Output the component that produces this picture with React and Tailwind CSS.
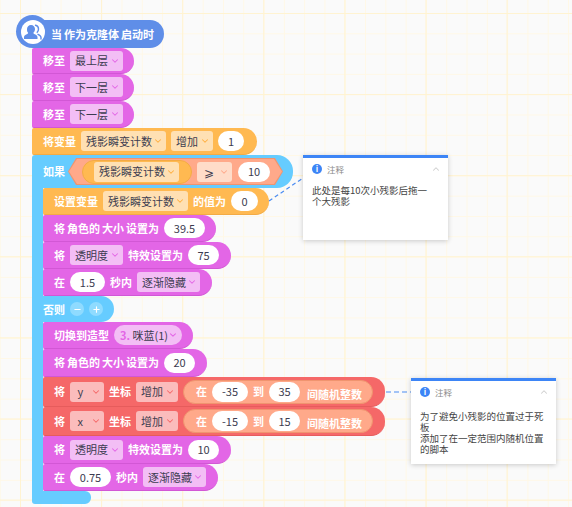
import { ChevronDown, ChevronUp, Minus, Plus } from "lucide-react";

const fontStack = { fontFamily: '"Noto Sans CJK SC", "Noto Sans", sans-serif' };

const themes = {
  purple: {
    block: "bg-[#e366e6] border-[#d257d5]",
    menu: "bg-[#f3bef5]",
    chevron: "text-[#e366e6]",
  },
  orange: {
    block: "bg-[#ffb951] border-[#f3ab45]",
    menu: "bg-[#ffe0b3]",
    chevron: "text-[#ffb040]",
  },
  red: {
    block: "bg-[#f56868] border-[#e65c5c]",
    menu: "bg-[#fbbcbc]",
    chevron: "text-[#f56868]",
  },
};

function Label({ children }) {
  return (
    <span className="text-[11px] font-bold leading-none text-white whitespace-pre [word-spacing:-0.5px]">{children}</span>
  );
}

function Menu({ text, theme, w, pill }) {
  return (
    <span
      className={`flex h-[20px] items-center justify-between pl-[5px] pr-[3px] text-[11px] leading-none text-[#3c3c50] ${
        pill ? "rounded-full" : "rounded-[3px]"
      } ${theme.menu}`}
      style={{ width: w }}
    >
      <span className="whitespace-pre">{text}</span>
      <ChevronDown size={10} strokeWidth={2.5} className={theme.chevron} />
    </span>
  );
}

function Num({ value, w }) {
  return (
    <span
      className="flex h-[20px] items-center justify-center rounded-full bg-white text-[11px] leading-none text-[#3c3c50]"
      style={{ width: w }}
    >
      {value}
    </span>
  );
}

function Block({ theme, w, h = 27, children }) {
  return (
    <div
      className={`flex items-center gap-[5px] rounded-r-[14px] rounded-l-[2px] border-b pl-[11px] ${theme.block}`}
      style={{ width: w, height: h }}
    >
      {children}
    </div>
  );
}

function CloneIcon() {
  return (
    <svg width="20" height="20" viewBox="0 0 20 20" className="text-[#5f8ee8]">
      <path
        d="M8 3c2.400 0 4 1.800 4 4 0 1.500-.6 2.800-1.500 3.600-.3.600 0 1 .6 1.300 1.800.7 3.400 1.500 3.400 3.300V17H1v-1.800c0-1.800 1.600-2.600 3.400-3.300.6-.3.900-.7.600-1.300C4.100 9.800 4 8.500 4 7c0-2.200 1.600-4 4-4z"
        fill="currentColor"
      />
      <path
        d="M12.500 3.300c1.800.3 3 1.800 3 3.700 0 1.300-.5 2.500-1.300 3.300M15 12.300c1.700.7 3 1.500 3 3.200V17"
        fill="none"
        stroke="currentColor"
        strokeWidth="1.400"
        strokeLinecap="round"
      />
    </svg>
  );
}

function InfoDot() {
  return (
    <span className="flex h-[10px] w-[10px] items-center justify-center rounded-full bg-[#3d85f6] text-[8px] font-bold leading-none text-white">
      i
    </span>
  );
}

function Note({ className, children }) {
  return (
    <div className={`absolute w-[145px] border-t-[3px] border-[#3d85f6] bg-white shadow-[0_1px_5px_rgba(0,0,0,0.2)] ${className}`}>
      <div className="flex h-[22px] items-center gap-[5px] pl-[9px] pr-[7px]">
        <InfoDot />
        <span className="text-[8.5px] leading-none text-[#8a8a8a]">注释</span>
        <ChevronUp size={10} strokeWidth={2.5} className="ml-auto text-[#cfcfcf]" />
      </div>
      {children}
    </div>
  );
}

function SizeBlock({ value, w, numW, h }) {
  return (
    <Block theme={themes.purple} w={w} h={h}>
      <Label>{"将 角色的 大小 设置为"}</Label>
      <Num value={value} w={numW} />
    </Block>
  );
}

function EffectBlock({ value, h }) {
  return (
    <Block theme={themes.purple} w={188} h={h}>
      <Label>将</Label>
      <Menu text="透明度" theme={themes.purple} w={53} />
      <Label>特效设置为</Label>
      <Num value={value} w={31} />
    </Block>
  );
}

function FadeBlock({ value, w, numW }) {
  return (
    <Block theme={themes.purple} w={w}>
      <Label>在</Label>
      <Num value={value} w={numW} />
      <Label>秒内</Label>
      <Menu text="逐渐隐藏" theme={themes.purple} w={63} />
    </Block>
  );
}

function RandomBlock({ axis, from, to, h }) {
  return (
    <Block theme={themes.red} w={342} h={h}>
      <Label>将</Label>
      <Menu text={` ${axis}`} theme={themes.red} w={34} />
      <Label>坐标</Label>
      <Menu text="增加" theme={themes.red} w={42} />
      <div className="flex h-[24px] w-[190px] items-center gap-[5px] rounded-full border border-[#f0946f] bg-[#ffa98a] pl-[12px]">
        <Label>在</Label>
        <Num value={from} w={36} />
        <Label>到</Label>
        <Num value={to} w={31} />
        <span className="ml-[2px]">
          <Label>间随机整数</Label>
        </span>
      </div>
    </Block>
  );
}

export default function App() {
  return (
    <div
      className="relative h-[507px] w-[572px] overflow-hidden bg-[#fafafa] pl-[32px] pt-[20px] [background-image:linear-gradient(#fff3d1_1px,transparent_1px),linear-gradient(90deg,#fff3d1_1px,transparent_1px),linear-gradient(#fff8e6_1px,transparent_1px),linear-gradient(90deg,#fff8e6_1px,transparent_1px)] [background-position:20px_13px,20px_13px,0_13px,20px_0] [background-size:81.1px_81.1px,81.1px_81.1px,20.3px_20.3px,20.3px_20.3px]"
      style={fontStack}
    >
      {/* hat */}
      <div className="relative flex h-[28px] w-[132px] items-center rounded-r-[14px] bg-[#5f8ee8] pl-[19px]">
        <div className="absolute left-[-16px] top-[-5px] flex h-[33px] w-[33px] items-center justify-center rounded-full bg-[#5f8ee8]">
          <div className="flex h-[24px] w-[24px] items-center justify-center rounded-full bg-white">
            <CloneIcon />
          </div>
        </div>
        <Label>{"当 作为克隆体 启动时"}</Label>
      </div>

      <Block theme={themes.purple} w={102} h={26}>
        <Label>移至</Label>
        <Menu text="最上层" theme={themes.purple} w={53} />
      </Block>
      <Block theme={themes.purple} w={102}>
        <Label>移至</Label>
        <Menu text="下一层" theme={themes.purple} w={53} />
      </Block>
      <Block theme={themes.purple} w={102}>
        <Label>移至</Label>
        <Menu text="下一层" theme={themes.purple} w={53} />
      </Block>

      <Block theme={themes.orange} w={225}>
        <Label>将变量</Label>
        <Menu text="残影瞬变计数" theme={themes.orange} w={85} />
        <Menu text="增加" theme={themes.orange} w={42} />
        <Num value="1" w={26} />
      </Block>

      {/* if / else */}
      <div className="flex h-[33px] w-[261px] items-center gap-[3px] rounded-r-[16px] rounded-tl-[3px] bg-[#66ccff] pl-[11px]">
        <Label>如果</Label>
        <div className="flex h-[27px] w-[215px] items-center bg-[#f0946f] [clip-path:polygon(8px_0,207px_0,100%_50%,207px_100%,8px_100%,0_50%)]">
          <div className="flex h-[25px] w-[213px] translate-x-[1px] items-center bg-[#ffa98a] pl-[13px] [clip-path:polygon(8px_0,205px_0,100%_50%,205px_100%,8px_100%,0_50%)]">
            <div className="flex h-[24px] w-[110px] items-center rounded-full border border-[#f3ab45] bg-[#ffb951] pl-[11px]">
              <Menu text="残影瞬变计数" theme={themes.orange} w={85} />
            </div>
            <div className="ml-[5px] flex h-[20px] w-[35px] items-center justify-between rounded-[3px] bg-[#ffdcc9] pl-[7px] pr-[3px] text-[12px] leading-none text-[#3c3c50]">
              <span>⩾</span>
              <ChevronDown size={10} strokeWidth={2.5} className="text-[#ffa98a]" />
            </div>
            <div className="ml-[6px]">
              <Num value="10" w={32} />
            </div>
          </div>
        </div>
      </div>

      <div className="w-[200px] border-l-[11px] border-[#66ccff]">
        <Block theme={themes.orange} w={226}>
          <Label>设置变量</Label>
          <Menu text="残影瞬变计数" theme={themes.orange} w={85} />
          <Label>的值为</Label>
          <Num value="0" w={27} />
        </Block>
        <SizeBlock value="39.5" w={173} numW={41} />
        <EffectBlock value="75" />
        <FadeBlock value="1.5" w={169} numW={35} />
      </div>

      <div className="flex h-[26px] w-[82px] items-center gap-[5px] rounded-r-[13px] bg-[#66ccff] pl-[11px]">
        <Label>否则</Label>
        <span className="flex h-[14px] w-[14px] items-center justify-center rounded-full bg-[#8fdbff] text-white">
          <Minus size={9} strokeWidth={3} />
        </span>
        <span className="flex h-[14px] w-[14px] items-center justify-center rounded-full bg-[#8fdbff] text-white">
          <Plus size={9} strokeWidth={3} />
        </span>
      </div>

      <div className="w-[200px] border-l-[11px] border-[#66ccff]">
        <Block theme={themes.purple} w={150}>
          <Label>切换到造型</Label>
          <span className="flex h-[20px] w-[68px] items-center justify-between rounded-full bg-[#f3bef5] pl-[6px] pr-[4px] text-[11px] leading-none text-[#3c3c50]">
            <span className="whitespace-pre">
              <span className="font-bold text-[#e366e6]">3.</span> 咪蓝(1)
            </span>
            <ChevronDown size={10} strokeWidth={2.5} className="text-[#e366e6]" />
          </span>
        </Block>
        <SizeBlock value="20" w={164} numW={31} h={28} />
        <RandomBlock axis="y" from="-35" to="35" h={30} />
        <RandomBlock axis="x" from="-15" to="15" h={29} />
        <EffectBlock value="10" h={28} />
        <FadeBlock value="0.75" w={175} numW={41} />
      </div>

      <div className="h-[13px] w-[59px] rounded-r-[6px] rounded-bl-[3px] bg-[#66ccff]" />

      {/* comment links */}
      <svg width="572" height="507" className="pointer-events-none absolute left-0 top-0">
        <path d="M269 201 L303 178" stroke="#4a8cf2" strokeWidth="1.200" strokeDasharray="4 3" fill="none" />
        <path d="M386 392 L411 392" stroke="#4a8cf2" strokeWidth="1.200" strokeDasharray="5 3" fill="none" />
      </svg>

      <Note className="left-[303px] top-[155px] h-[85px]">
        <p className="mt-[5px] px-[9px] text-[9.5px] leading-[11px] text-[#444]">
          此处是每10次小残影后拖一
          <br />
          个大残影
        </p>
      </Note>
      <Note className="left-[411px] top-[378px] h-[86px]">
        <p className="mt-[8px] px-[9px] text-[9.5px] leading-[11px] text-[#444]">
          为了避免小残影的位置过于死板
          <br />
          添加了在一定范围内随机位置的脚本
        </p>
      </Note>
    </div>
  );
}
